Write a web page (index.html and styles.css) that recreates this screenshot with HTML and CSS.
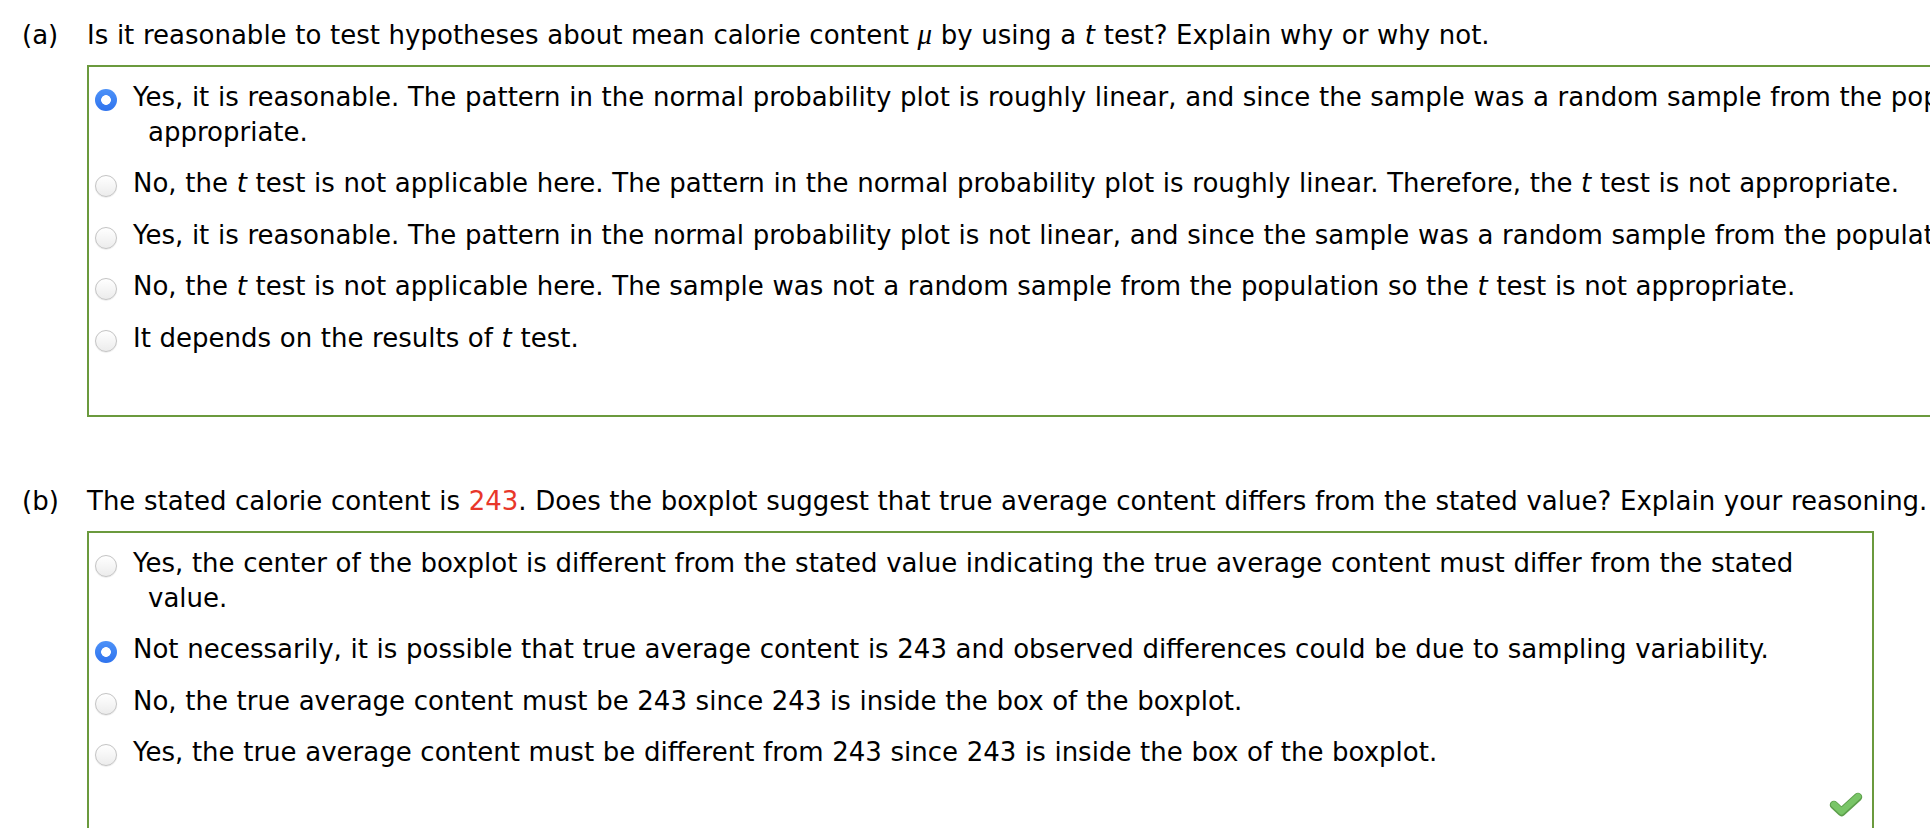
FILE: index.html
```html
<!DOCTYPE html>
<html lang="en">
<head>
<meta charset="utf-8">
<title>Calorie content question</title>
<link rel="stylesheet" href="styles.css">
</head>
<body>
<div class="page">
  <section class="part">
    <div class="part-label">(a)</div>
    <div class="part-body">
      <p class="question">Is it reasonable to test hypotheses about mean calorie content <i class="math">μ</i> by using a <i>t</i> test? Explain why or why not.</p>
      <div class="answer-box answer-box--wide">
        <ul class="options">
          <li class="option"><span class="radio radio--checked"></span><span class="option-text">Yes, it is reasonable. The pattern in the normal probability plot is roughly linear, and since the sample was a random sample from the population, the <i>t</i> test is appropriate.</span></li>
          <li class="option"><span class="radio"></span><span class="option-text">No, the <i>t</i> test is not applicable here. The pattern in the normal probability plot is roughly linear. Therefore, the <i>t</i> test is not appropriate.</span></li>
          <li class="option"><span class="radio"></span><span class="option-text">Yes, it is reasonable. The pattern in the normal probability plot is not linear, and since the sample was a random sample from the population, the <i>t</i> test is appropriate.</span></li>
          <li class="option"><span class="radio"></span><span class="option-text">No, the <i>t</i> test is not applicable here. The sample was not a random sample from the population so the <i>t</i> test is not appropriate.</span></li>
          <li class="option"><span class="radio"></span><span class="option-text">It depends on the results of <i>t</i> test.</span></li>
        </ul>
      </div>
    </div>
  </section>
  <section class="part">
    <div class="part-label">(b)</div>
    <div class="part-body">
      <p class="question">The stated calorie content is <span class="highlight">243</span>. Does the boxplot suggest that true average content differs from the stated value? Explain your reasoning.</p>
      <div class="answer-box answer-box--narrow">
        <ul class="options">
          <li class="option"><span class="radio"></span><span class="option-text">Yes, the center of the boxplot is different from the stated value indicating the true average content must differ from the stated value.</span></li>
          <li class="option"><span class="radio radio--checked"></span><span class="option-text">Not necessarily, it is possible that true average content is 243 and observed differences could be due to sampling variability.</span></li>
          <li class="option"><span class="radio"></span><span class="option-text">No, the true average content must be 243 since 243 is inside the box of the boxplot.</span></li>
          <li class="option"><span class="radio"></span><span class="option-text">Yes, the true average content must be different from 243 since 243 is inside the box of the boxplot.</span></li>
        </ul>
        <svg class="check" viewBox="0 0 36 28" width="36" height="28" aria-label="correct">
          <polyline points="6,15 13.5,22 30,7" fill="none" stroke="#5d9f4c" stroke-width="8.5" stroke-linecap="round" stroke-linejoin="round"/>
          <polyline points="6,14.5 13.5,21.5 30,6.5" fill="none" stroke="#79c567" stroke-width="6" stroke-linecap="round" stroke-linejoin="round"/>
        </svg>
      </div>
    </div>
  </section>
</div>
</body>
</html>
```

FILE: styles.css
```css
html {
  overflow: hidden;
}

body {
  margin: 0;
  background: #fff;
  color: #000;
  font-family: "DejaVu Sans", Verdana, sans-serif;
  font-size: 26px;
  line-height: 35px;
  word-spacing: 0.4px;
}

.page {
  padding: 17.5px 0 0 22px;
}

.part {
  display: flex;
}

.part + .part {
  margin-top: 66.5px;
}

.part-label {
  flex: none;
  width: 65px;
}

.part-body {
  flex: none;
  width: max-content;
}

.question {
  margin: 0 0 12px;
  white-space: nowrap;
}

.math {
  font-family: "Liberation Serif", "DejaVu Serif", serif;
  font-style: italic;
  font-size: 29px;
  line-height: 0;
}

.highlight {
  color: #e8372a;
}

.answer-box {
  position: relative;
  box-sizing: border-box;
  border: 2px solid #6b9a3e;
  padding: 13px 10px 59.5px 6px;
}

.answer-box--wide {
  width: 2268px;
}

.answer-box--narrow {
  width: 1787px;
}

.options {
  list-style: none;
  margin: 0;
  padding: 0;
  display: flex;
  flex-direction: column;
  gap: 16.5px;
}

.option {
  display: flex;
  align-items: flex-start;
}

.radio {
  flex: none;
  box-sizing: border-box;
  width: 22px;
  height: 22px;
  margin: 9px 16px 0 0;
  border-radius: 50%;
  border: 1px solid #c4c4c4;
  background: linear-gradient(#ffffff, #ececec);
  box-shadow: 0 0.5px 1px rgba(0, 0, 0, 0.12);
}

.radio--checked {
  border: none;
  background:
    radial-gradient(circle, #fff 0 4.5px, transparent 5.2px),
    linear-gradient(#4d92f8, #2f73ee);
  box-shadow: none;
}

.option-text {
  flex: 1;
  padding-left: 15px;
  text-indent: -15px;
}

.check {
  position: absolute;
  right: 8px;
  bottom: 12px;
}
```
